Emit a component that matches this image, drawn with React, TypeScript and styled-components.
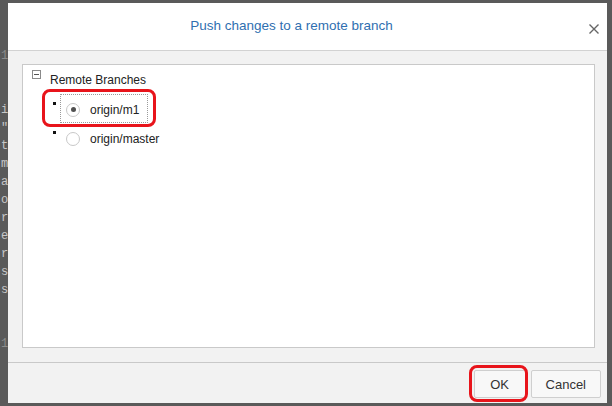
import React from "react";
import styled, { createGlobalStyle } from "styled-components";

const GlobalStyle = createGlobalStyle`
  html, body { margin: 0; padding: 0; }
  body {
    background: #5a5a5a;
    font-family: "Liberation Sans", Arial, sans-serif;
    width: 612px;
    height: 406px;
    overflow: hidden;
  }
`;

const Screen = styled.div`
  display: flex;
  align-items: flex-start;
  width: 612px;
  height: 406px;
  background: #5a5a5a;
`;

const Gutter = styled.div`
  width: 8px;
  height: 406px;
  flex: none;
  overflow: hidden;
  padding-top: 47px;
  box-sizing: border-box;
  font-family: "Liberation Mono", "DejaVu Sans Mono", monospace;
  font-size: 12px;
  line-height: 18px;
`;

const CodeLine = styled.div<{ $dim?: boolean }>`
  height: 18px;
  padding-left: 1px;
  color: ${(p) => (p.$dim ? "#8c8c8c" : "#c8c8c8")};
  white-space: pre;
`;

const Dialog = styled.div`
  margin-top: 3px;
  width: 599px;
  height: 400px;
  display: flex;
  flex-direction: column;
  background: #f2f2f2;
`;

const Header = styled.div`
  height: 47px;
  flex: none;
  display: flex;
  align-items: center;
  background: #ffffff;
  border-bottom: 1px solid #d2d2d2;
`;

const Title = styled.h1`
  flex: 1;
  margin: 0;
  padding: 0 14px 2px 0;
  text-align: center;
  font-size: 13.5px;
  font-weight: normal;
  color: #2f6fb0;
`;

const CloseButton = styled.button`
  width: 10px;
  height: 10px;
  margin: 4px 8px 0 0;
  padding: 0;
  border: none;
  background: none;
  display: flex;
  align-items: center;
  justify-content: center;
  cursor: pointer;
`;

const Body = styled.div`
  flex: 1;
  display: flex;
  padding: 13px 12px 14px 14px;
  min-height: 0;
`;

const Panel = styled.div`
  flex: 1;
  background: #ffffff;
  border: 1px solid #c9c9c9;
  padding: 5px 0 0 9px;
`;

const TreeHeader = styled.div`
  display: flex;
  align-items: flex-start;
  gap: 9px;
`;

const Toggle = styled.span`
  width: 7px;
  height: 7px;
  border: 1px solid #8a8a8a;
  position: relative;
  flex: none;
  &::after {
    content: "";
    position: absolute;
    left: 1px;
    right: 1px;
    top: 3px;
    height: 1px;
    background: #555;
  }
`;

const TreeLabel = styled.span`
  font-size: 12px;
  line-height: 12px;
  color: #222;
  margin-top: 4px;
`;

const BranchList = styled.ul`
  list-style: none;
  margin: 8px 0 0 0;
  padding: 0 0 0 21px;
  display: flex;
  flex-direction: column;
`;

const BranchRow = styled.li`
  display: flex;
  align-items: flex-start;
  gap: 4px;
  height: 29px;
`;

const Bullet = styled.span`
  width: 3px;
  height: 3px;
  background: #111;
  flex: none;
  margin-top: 8px;
`;

const Option = styled.label<{ $focused?: boolean }>`
  position: relative;
  display: flex;
  align-items: center;
  gap: 10px;
  height: 29px;
  box-sizing: border-box;
  padding: 2px 8px 0 5px;
  border: 1px dotted ${(p) => (p.$focused ? "#9a9a9a" : "transparent")};
  font-size: 12px;
  color: #222;
  cursor: pointer;
`;

const Radio = styled.span<{ $checked?: boolean }>`
  width: 12px;
  height: 12px;
  border: 1px solid #c8c8c8;
  border-radius: 50%;
  background: #fff;
  position: relative;
  flex: none;
  &::after {
    content: "";
    display: ${(p) => (p.$checked ? "block" : "none")};
    position: absolute;
    left: 3.5px;
    top: 3.5px;
    width: 5px;
    height: 5px;
    border-radius: 50%;
    background: #505050;
  }
`;

const Highlight = styled.span<{ $t: number; $r: number; $b: number; $l: number }>`
  position: absolute;
  top: ${(p) => p.$t}px;
  right: ${(p) => p.$r}px;
  bottom: ${(p) => p.$b}px;
  left: ${(p) => p.$l}px;
  border: 3px solid #e8141b;
  border-radius: 8px;
  pointer-events: none;
`;

const Footer = styled.div`
  height: 41px;
  flex: none;
  border-top: 1px solid #c9c9c9;
  display: flex;
  justify-content: flex-end;
  align-items: flex-start;
  gap: 5px;
  padding: 7px 6px 0 0;
  box-sizing: border-box;
`;

const Button = styled.button`
  position: relative;
  height: 28px;
  padding: 0 14px;
  background: #f8f8f8;
  border: 1px solid #cfcfcf;
  border-radius: 2px;
  font-family: "Liberation Sans", Arial, sans-serif;
  font-size: 13px;
  color: #333;
  cursor: pointer;
  min-width: 52px;
`;

const codeLines: { t: string; dim?: boolean }[] = [
  { t: "1", dim: true },
  { t: "" },
  { t: "" },
  { t: "i" },
  { t: "\"" },
  { t: "t" },
  { t: "m" },
  { t: "a" },
  { t: "o" },
  { t: "r" },
  { t: "e" },
  { t: "r" },
  { t: "s" },
  { t: "s" },
  { t: "" },
  { t: "" },
  { t: "1", dim: true },
];

export default function App() {
  return (
    <>
      <GlobalStyle />
      <Screen>
        <Gutter>
          {codeLines.map((l, i) => (
            <CodeLine key={i} $dim={l.dim}>
              {l.t}
            </CodeLine>
          ))}
        </Gutter>
        <Dialog>
          <Header>
            <Title>Push changes to a remote branch</Title>
            <CloseButton aria-label="Close">
              <svg width="10" height="10" viewBox="0 0 10 10">
                <path d="M0.5 0.5 L9.5 9.5 M9.5 0.5 L0.5 9.5" stroke="#666" strokeWidth="1.4" />
              </svg>
            </CloseButton>
          </Header>
          <Body>
            <Panel>
              <TreeHeader>
                <Toggle />
                <TreeLabel>Remote Branches</TreeLabel>
              </TreeHeader>
              <BranchList>
                <BranchRow>
                  <Bullet />
                  <Option $focused>
                    <Radio $checked />
                    origin/m1
                    <Highlight $t={-6} $r={-9} $b={-5} $l={-19} />
                  </Option>
                </BranchRow>
                <BranchRow>
                  <Bullet />
                  <Option>
                    <Radio />
                    origin/master
                  </Option>
                </BranchRow>
              </BranchList>
            </Panel>
          </Body>
          <Footer>
            <Button>
              OK
              <Highlight $t={-6} $r={-3} $b={-5} $l={-6} />
            </Button>
            <Button>Cancel</Button>
          </Footer>
        </Dialog>
      </Screen>
    </>
  );
}
